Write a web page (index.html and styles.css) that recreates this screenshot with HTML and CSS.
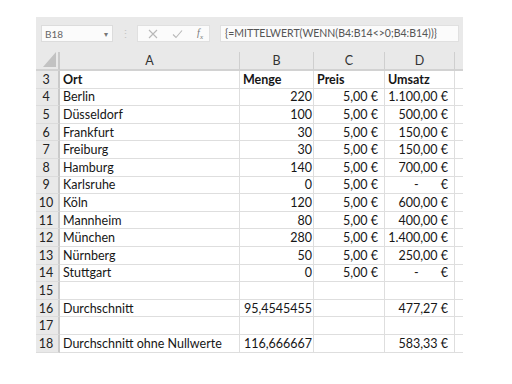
FILE: index.html
```html
<!DOCTYPE html>
<html lang="de">
<head>
    <meta charset="UTF-8">
    <title>Mittelwert ohne Nullwerte</title>
    <link rel="stylesheet" href="styles.css">
</head>
<body>
    <div class="sheet">
        <div class="toolbar">
            <div class="namebox">
                <span>B18</span>
                <span class="arrow">&#9662;</span>
            </div>
            <div class="grip">&#8942;</div>
            <div class="fxbox">
                <svg width="10" height="10" viewBox="0 0 10 10"><path d="M1 1L9 9M9 1L1 9" stroke="#b8b8b8" stroke-width="1.1" fill="none"/></svg>
                <svg width="11" height="10" viewBox="0 0 11 10"><path d="M1 5.5L4 8.5L10 1.5" stroke="#b8b8b8" stroke-width="1.1" fill="none"/></svg>
                <span class="fx">f<sub>x</sub></span>
            </div>
            <div class="formula">{=MITTELWERT(WENN(B4:B14&lt;&gt;0;B4:B14))}</div>
        </div>

        <table class="grid">
            <colgroup>
                <col class="c-row">
                <col class="c-a">
                <col class="c-b">
                <col class="c-c">
                <col class="c-d">
                <col class="c-e">
            </colgroup>
            <thead>
                <tr>
                    <th class="corner"><span class="tri"></span></th>
                    <th>A</th>
                    <th>B</th>
                    <th>C</th>
                    <th>D</th>
                    <th></th>
                </tr>
            </thead>
            <tbody>
                <tr class="bold"><th>3</th><td>Ort</td><td>Menge</td><td>Preis</td><td>Umsatz</td><td></td></tr>
                <tr><th>4</th><td>Berlin</td><td class="num">220</td><td class="eur">5,00 €</td><td class="eur">1.100,00 €</td><td></td></tr>
                <tr><th>5</th><td>Düsseldorf</td><td class="num">100</td><td class="eur">5,00 €</td><td class="eur">500,00 €</td><td></td></tr>
                <tr><th>6</th><td>Frankfurt</td><td class="num">30</td><td class="eur">5,00 €</td><td class="eur">150,00 €</td><td></td></tr>
                <tr><th>7</th><td>Freiburg</td><td class="num">30</td><td class="eur">5,00 €</td><td class="eur">150,00 €</td><td></td></tr>
                <tr><th>8</th><td>Hamburg</td><td class="num">140</td><td class="eur">5,00 €</td><td class="eur">700,00 €</td><td></td></tr>
                <tr><th>9</th><td>Karlsruhe</td><td class="num">0</td><td class="eur">5,00 €</td><td class="eur"><span class="dash">-</span>€</td><td></td></tr>
                <tr><th>10</th><td>Köln</td><td class="num">120</td><td class="eur">5,00 €</td><td class="eur">600,00 €</td><td></td></tr>
                <tr><th>11</th><td>Mannheim</td><td class="num">80</td><td class="eur">5,00 €</td><td class="eur">400,00 €</td><td></td></tr>
                <tr><th>12</th><td>München</td><td class="num">280</td><td class="eur">5,00 €</td><td class="eur">1.400,00 €</td><td></td></tr>
                <tr><th>13</th><td>Nürnberg</td><td class="num">50</td><td class="eur">5,00 €</td><td class="eur">250,00 €</td><td></td></tr>
                <tr><th>14</th><td>Stuttgart</td><td class="num">0</td><td class="eur">5,00 €</td><td class="eur"><span class="dash">-</span>€</td><td></td></tr>
                <tr><th>15</th><td></td><td></td><td></td><td></td><td></td></tr>
                <tr><th>16</th><td>Durchschnitt</td><td class="num">95,4545455</td><td></td><td class="eur">477,27 €</td><td></td></tr>
                <tr><th>17</th><td></td><td></td><td></td><td></td><td></td></tr>
                <tr><th>18</th><td>Durchschnitt ohne Nullwerte</td><td class="num">116,666667</td><td></td><td class="eur">583,33 €</td><td></td></tr>
            </tbody>
        </table>
    </div>
</body>
</html>
```

FILE: styles.css
```css
body {
    margin: 0;
    background-color: #fff;
    font-family: Lato, "Liberation Sans", sans-serif;
    color: #161616;
}

.sheet {
    width: 427px;
    margin: 17px 0 0 36px;
}

/* formula bar */
.toolbar {
    display: flex;
    align-items: flex-start;
    height: 35px;
    padding: 8px 4px 0 5px;
    background-color: #e9e9e9;
    box-sizing: border-box;
}

.namebox {
    display: flex;
    justify-content: space-between;
    align-items: center;
    width: 72px;
    height: 17px;
    padding: 0 4px 0 3px;
    box-sizing: border-box;
    background-color: #fbfbfb;
    border: 1px solid #dcdcdc;
    font-size: 10px;
    color: #666;
}

.namebox .arrow {
    font-size: 8px;
    color: #777;
}

.grip {
    width: 24px;
    height: 17px;
    line-height: 17px;
    text-align: center;
    font-size: 11px;
    color: #c4c4c4;
}

.fxbox {
    display: flex;
    align-items: center;
    justify-content: space-between;
    width: 73px;
    height: 17px;
    box-sizing: border-box;
    padding: 0 6px 0 10px;
    background-color: #fbfbfb;
    border: 1px solid #e0e0e0;
}

.fx {
    font-family: "Liberation Serif", serif;
    font-style: italic;
    font-size: 10px;
    color: #777;
}

.fx sub {
    font-size: 7px;
}

.formula {
    flex: 1;
    height: 17px;
    margin-left: 10px;
    padding-left: 4px;
    box-sizing: border-box;
    background-color: #fbfbfb;
    border: 1px solid #e0e0e0;
    font-size: 10.5px;
    line-height: 15px;
    color: #555;
    white-space: nowrap;
    overflow: hidden;
}

/* grid */
.grid {
    width: 427px;
    table-layout: fixed;
    border-collapse: separate;
    border-spacing: 0;
    font-size: 12.5px;
}

.c-row { width: 24px; }
.c-a { width: 180px; }
.c-b { width: 74px; }
.c-c { width: 71px; }
.c-d { width: 70px; }
.c-e { width: 8px; }

.grid thead th {
    height: 19px;
    padding: 0;
    background-color: #e9e9e9;
    border-right: 1px solid #cfcfcf;
    border-bottom: 2px solid #d2d2d2;
    font-weight: normal;
    font-size: 12.5px;
    color: #333;
    box-sizing: border-box;
}

.grid thead th:last-child {
    border-right: none;
}

.grid .corner {
    position: relative;
    border-right: 2px solid #cacaca;
}

.tri {
    position: absolute;
    right: 2px;
    bottom: 2px;
    width: 0;
    height: 0;
    border-left: 13px solid transparent;
    border-bottom: 15px solid #c2c2c2;
}

.grid tbody tr {
    height: 17.6px;
}

.grid tbody th {
    padding: 0 2px 0 0;
    background-color: #e9e9e9;
    border-right: 2px solid #cacaca;
    border-bottom: 1px solid #dcdcdc;
    font-weight: normal;
    text-align: center;
    color: #222;
}

.grid td {
    padding: 0 3px;
    border-right: 1px solid #dedede;
    border-bottom: 1px solid #dedede;
    white-space: nowrap;
    overflow: hidden;
}

.grid td:last-child {
    border-right: none;
}

.bold td {
    font-weight: bold;
}

.grid .num {
    text-align: right;
    padding-right: 1px;
}

.grid .eur {
    text-align: right;
    padding-right: 6px;
}

.dash {
    margin-right: 22px;
}
```
